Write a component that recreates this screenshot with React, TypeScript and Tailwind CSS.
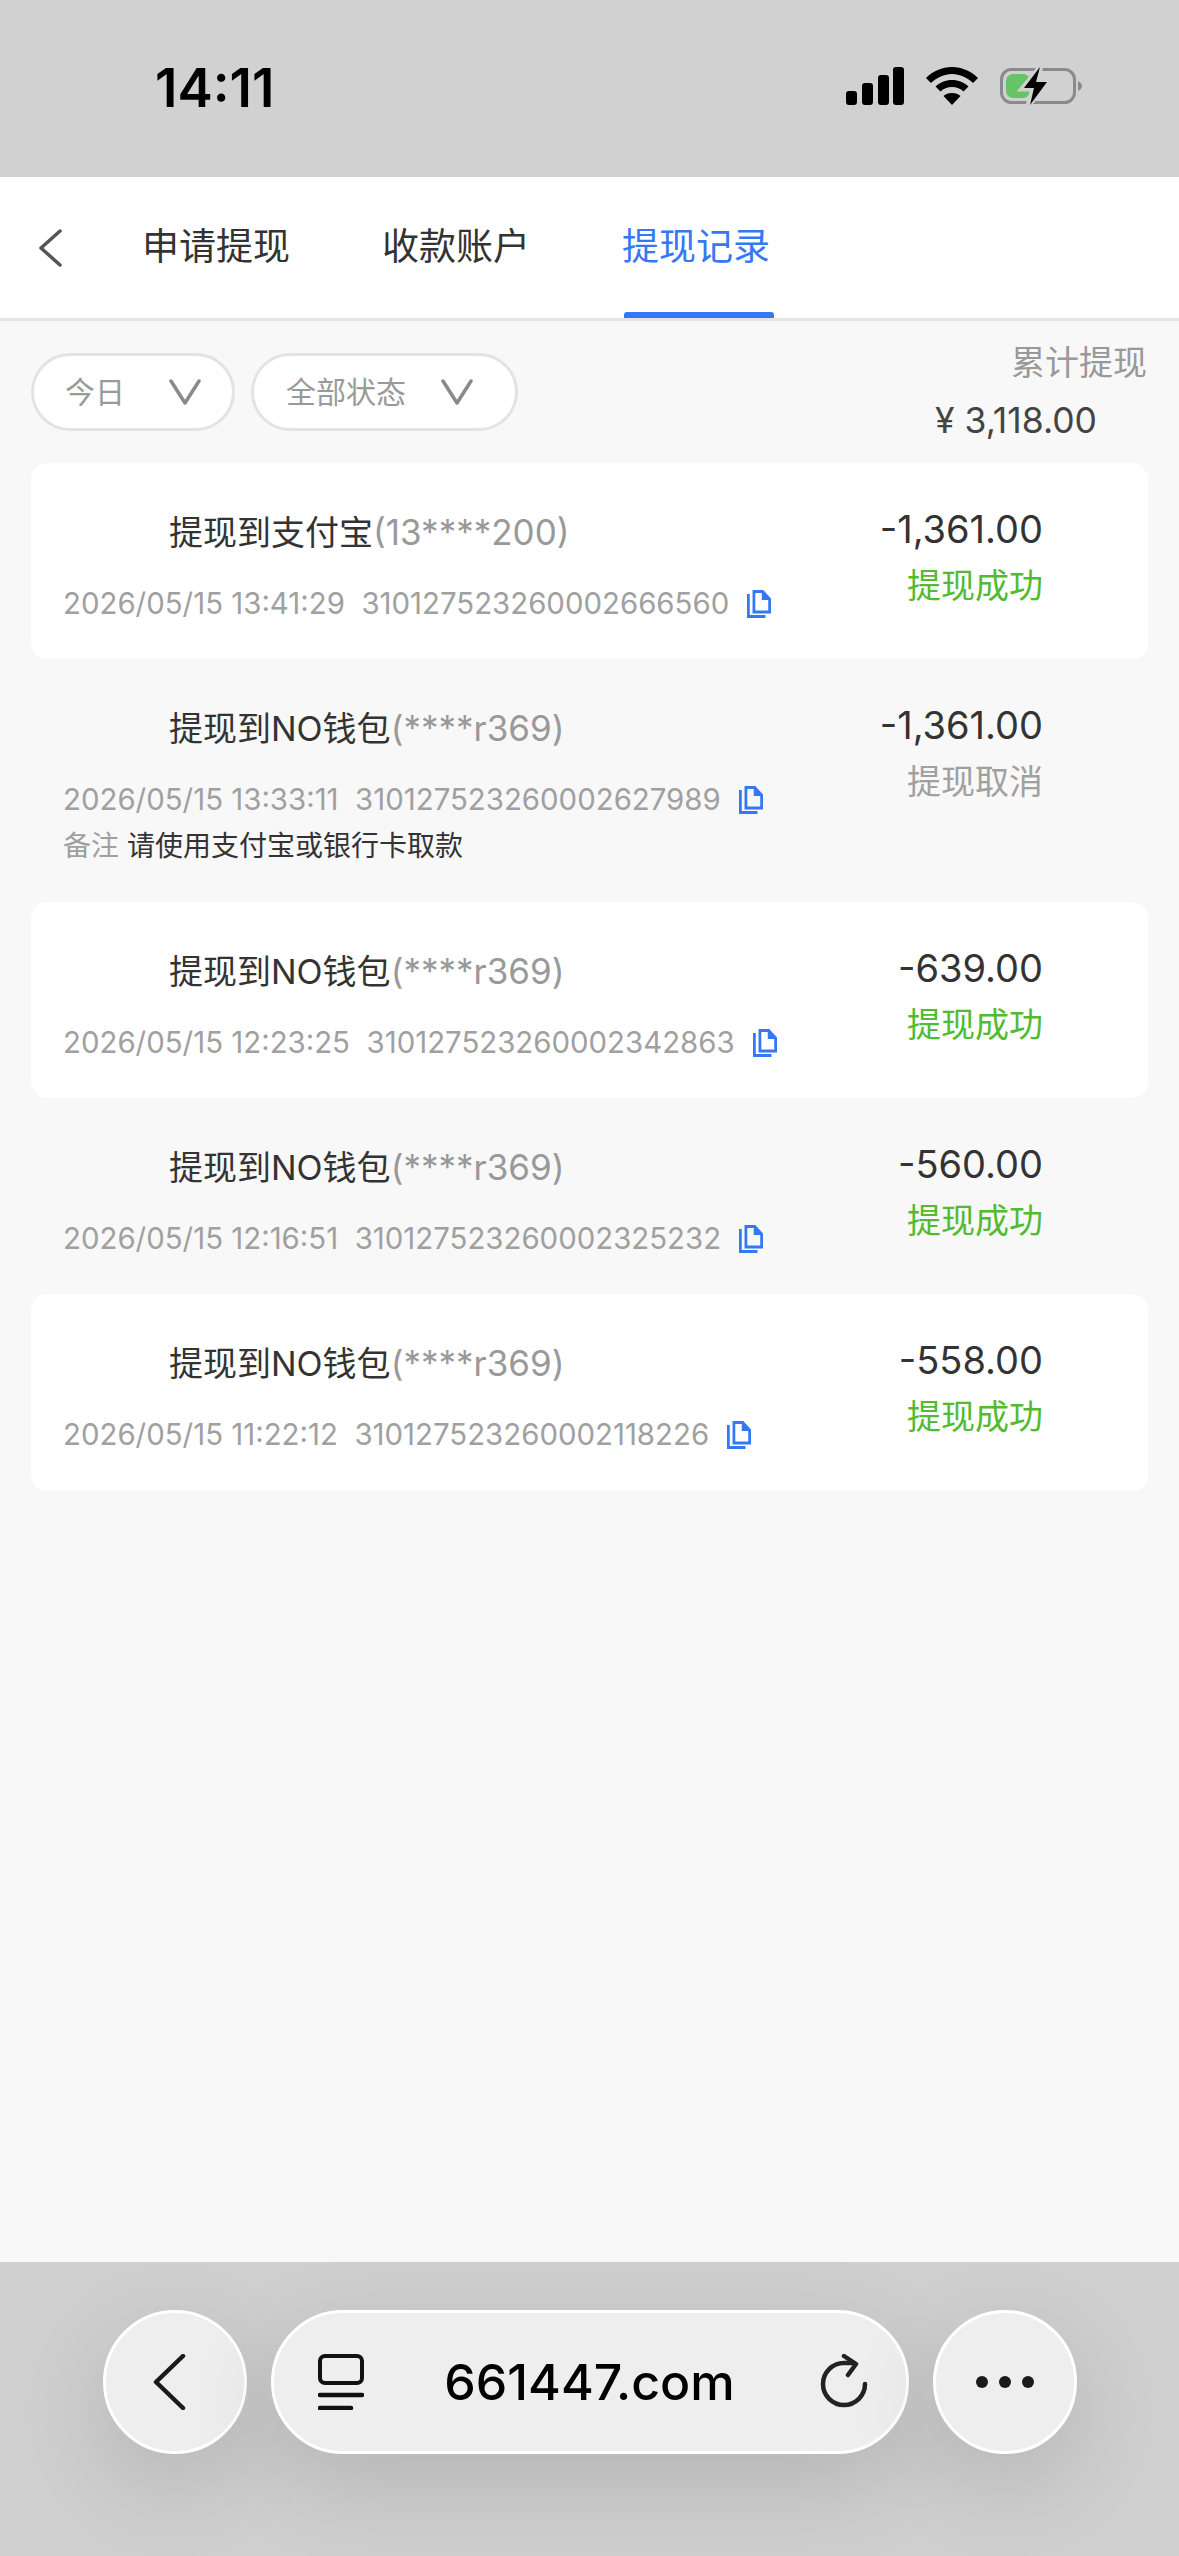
import React from "react";

const SANS = "font-['Inter','Noto_Sans_CJK_SC',sans-serif]";

const CopyIcon = () => (
  <svg width="24" height="28" viewBox="0 0 26 28" className="shrink-0" preserveAspectRatio="none">
    <path d="M1.5 4v22.5H20" fill="none" stroke="#3578f6" strokeWidth="3" />
    <path d="M7.5 1.5H17l7.5 7.5v13H7.5z" fill="none" stroke="#3578f6" strokeWidth="3" />
    <path d="M16 1l9 9h-9z" fill="#3578f6" />
  </svg>
);

const Chevron = () => (
  <svg width="32" height="26" viewBox="0 0 32 26">
    <path d="M2 2l14 22L30 2" fill="none" stroke="#8a8a8a" strokeWidth="3.5" strokeLinecap="round" strokeLinejoin="round" />
  </svg>
);

type Row = {
  title: string;
  account: string;
  time: string;
  no: string;
  amount: string;
  status: string;
  ok: boolean;
  note?: string;
  white: boolean;
};

const rows: Row[] = [
  { title: "提现到支付宝", account: "(13****200)", time: "2026/05/15 13:41:29", no: "310127523260002666560", amount: "-1,361.00", status: "提现成功", ok: true, white: true },
  { title: "提现到NO钱包", account: "(****r369)", time: "2026/05/15 13:33:11", no: "310127523260002627989", amount: "-1,361.00", status: "提现取消", ok: false, note: "请使用支付宝或银行卡取款", white: false },
  { title: "提现到NO钱包", account: "(****r369)", time: "2026/05/15 12:23:25", no: "310127523260002342863", amount: "-639.00", status: "提现成功", ok: true, white: true },
  { title: "提现到NO钱包", account: "(****r369)", time: "2026/05/15 12:16:51", no: "310127523260002325232", amount: "-560.00", status: "提现成功", ok: true, white: false },
  { title: "提现到NO钱包", account: "(****r369)", time: "2026/05/15 11:22:12", no: "310127523260002118226", amount: "-558.00", status: "提现成功", ok: true, white: true },
];

const RecordRow = ({ row }: { row: Row }) => (
  <div className={`flex justify-between rounded-[16px] pl-[32px] pr-[105px] last:h-[197px] ${row.note ? "h-[243px]" : "h-[196px]"} ${row.white ? "bg-white" : ""}`}>
    <div className="flex flex-col pt-[45px]">
      <p className="pl-[106px] text-[34px] leading-[48px] text-[#333333]">
        {row.title}
        <span className="text-[35px] text-[#999999]">{row.account}</span>
      </p>
      <div className="mt-[27px] flex items-center gap-[18px] text-[29.4px] leading-[40px] text-[#a0a0a0]">
        <span className="whitespace-pre">{row.time}  {row.no}</span>
        <CopyIcon />
      </div>
      {row.note && (
        <p className="mt-[7px] text-[28px] leading-[38px] text-[#333333]">
          <span className="text-[#a0a0a0]">备注</span> {row.note}
        </p>
      )}
    </div>
    <div className="flex flex-col items-end pt-[42px]">
      <p className="text-[38px] leading-[48px] text-[#333333]">{row.amount}</p>
      <p className={`mt-[10px] text-[34px] leading-[46px] ${row.ok ? "text-[#52bb2f]" : "text-[#a0a0a0]"}`}>{row.status}</p>
    </div>
  </div>
);

export default function App() {
  return (
    <div className={`flex h-[2556px] flex-col overflow-hidden bg-[#f8f8f8] ${SANS}`}>
      <div className="flex h-[177px] items-start justify-between bg-[#d1d1d1] pl-[155px] pr-[97px] pt-[58px]">
        <span className="text-[53px] font-semibold leading-[60px] text-black">14:11</span>
        <div className="flex items-center gap-[22px] pt-[9px]">
          <svg width="58" height="38" viewBox="0 0 58 38">
            <rect x="0" y="24" width="11" height="14" rx="3" />
            <rect x="16" y="16" width="11" height="22" rx="3" />
            <rect x="32" y="8" width="11" height="30" rx="3" />
            <rect x="47" y="0" width="11" height="38" rx="3" />
          </svg>
          <svg width="52" height="38" viewBox="0 0 52 38">
            <path d="M26 0C16 0 7 4 0 11l5 5c6-5.500 13-9 21-9s15 3.500 21 9l5-5C45 4 36 0 26 0z" />
            <path d="M26 13c-6.500 0-12 2.500-16.500 6.500l5 5c3-3 7-4.500 11.500-4.500s8.500 1.500 11.500 4.500l5-5C38 15.500 32.500 13 26 13z" />
            <path d="M26 26c-3.500 0-6.500 1-8.500 3L26 38l8.500-9c-2-2-5-3-8.500-3z" />
          </svg>
          <svg width="82" height="38" viewBox="0 0 82 38">
            <rect x="1.500" y="2.500" width="73" height="33" rx="10" fill="none" stroke="#8a8a8a" strokeWidth="3" />
            <path d="M78 14c2.500 1 4 3 4 5s-1.500 4-4 5z" fill="#8a8a8a" />
            <rect x="6" y="7" width="24" height="24" rx="7" fill="#65c466" />
            <path d="M41 -1L22 22h11l-5 17 20-24H36z" fill="#d1d1d1" stroke="#d1d1d1" strokeWidth="5" />
            <path d="M40 0L24 21h10l-4 17 17-23H36z" fill="#000" />
          </svg>
        </div>
      </div>

      <div className="relative flex h-[144px] items-start border-b-[3px] border-[#e5e5e5] bg-white pt-[46px] pl-[38px]">
        <svg width="24" height="38" viewBox="0 0 24 38" className="mt-[6px]">
          <path d="M22 2L3 19l19 17" fill="none" stroke="#555555" strokeWidth="3.500" strokeLinecap="round" strokeLinejoin="round" />
        </svg>
        <div className="ml-[80px] flex gap-[92px] text-[37px] leading-[48px] text-[#333333]">
          <span>申请提现</span>
          <span>收款账户</span>
          <span className="text-[#3578f6]">提现记录</span>
        </div>
        <div className="absolute left-[624px] bottom-0 h-[6px] w-[150px] rounded-t-[3px] bg-[#3578f6]" />
      </div>

      <div className="flex-1 px-[31px]">
        <div className="flex h-[142px] items-start justify-between">
          <div className="flex gap-[16px] pt-[32px]">
            <div className="flex h-[78px] w-[204px] items-center justify-between rounded-full border-[3px] border-[#e3e3e3] bg-white pl-[31px] pr-[31px] text-[30px] text-[#999999]">
              <span>今日</span>
              <Chevron />
            </div>
            <div className="flex h-[78px] w-[267px] items-center justify-between rounded-full border-[3px] border-[#e3e3e3] bg-white pl-[32px] pr-[42px] text-[30px] text-[#999999]">
              <span>全部状态</span>
              <Chevron />
            </div>
          </div>
          <div className="flex flex-col items-end pt-[19px]">
            <span className="pr-[1px] text-[34px] leading-[46px] text-[#999999]">累计提现</span>
            <span className="mt-[12px] pr-[51px] text-[35.5px] leading-[46px] text-[#444444]">¥ 3,118.00</span>
          </div>
        </div>
        <div className="flex flex-col">
          {rows.map((row) => (
            <RecordRow key={row.no} row={row} />
          ))}
        </div>
      </div>

      <div className="flex h-[294px] justify-center gap-[24px] bg-[#cfcfcf] pt-[48px]">
        <div className="flex size-[144px] items-center justify-center rounded-full border-[3px] border-white bg-[#eeeeee] pr-[12px] shadow-[0_30px_90px_rgba(0,0,0,0.13)]">
          <svg width="34" height="56" viewBox="0 0 34 56">
            <path d="M31 2L4 28l27 26" fill="none" stroke="#1a1a1a" strokeWidth="4.500" strokeLinecap="round" strokeLinejoin="round" />
          </svg>
        </div>
        <div className="flex h-[144px] w-[638px] items-center justify-between rounded-[72px] border-[3px] border-white bg-[#eeeeee] pl-[44px] pr-[38px] shadow-[0_30px_90px_rgba(0,0,0,0.13)]">
          <svg width="46" height="56" viewBox="0 0 46 56">
            <rect x="2" y="2" width="42" height="27" rx="5" fill="none" stroke="#111111" strokeWidth="4" />
            <path d="M2 41h42M2 54h31" fill="none" stroke="#111111" strokeWidth="4.500" strokeLinecap="round" />
          </svg>
          <span className="pr-[4px] text-[50px] font-medium leading-[60px] text-black">661447.com</span>
          <svg width="48" height="56" viewBox="0 0 48 56">
            <path d="M45 30a21 21 0 1 1-21-21h10" fill="none" stroke="#222222" strokeWidth="4.500" strokeLinecap="round" />
            <path d="M24 2l12 8-8 11" fill="none" stroke="#222222" strokeWidth="4.500" strokeLinecap="round" strokeLinejoin="round" />
          </svg>
        </div>
        <div className="flex size-[144px] items-center justify-center gap-[11px] rounded-full border-[3px] border-white bg-[#eeeeee] shadow-[0_30px_90px_rgba(0,0,0,0.13)]">
          <span className="size-[12px] rounded-full bg-[#1a1a1a]" />
          <span className="size-[12px] rounded-full bg-[#1a1a1a]" />
          <span className="size-[12px] rounded-full bg-[#1a1a1a]" />
        </div>
      </div>
    </div>
  );
}
